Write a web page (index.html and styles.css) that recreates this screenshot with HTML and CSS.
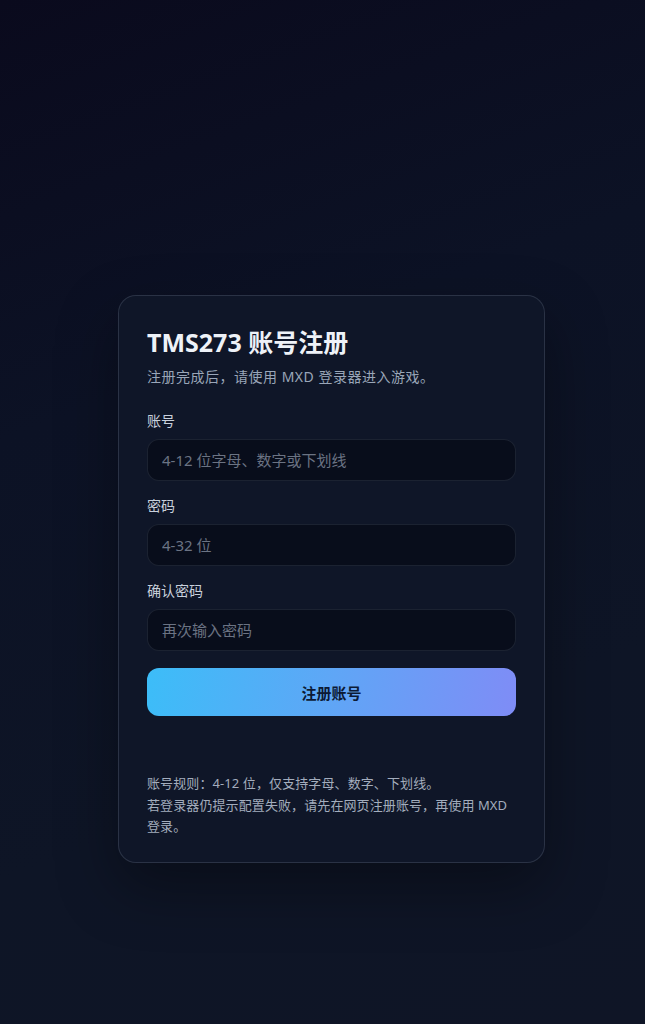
FILE: index.html
```html
<!DOCTYPE html>
<html lang="zh-CN">
<head>
<meta charset="utf-8">
<title>TMS273 账号注册</title>
<link rel="stylesheet" href="styles.css">
</head>
<body>
<main class="page">
  <section class="card">
    <h1 class="title">TMS273 账号注册</h1>
    <p class="subtitle">注册完成后，请使用 MXD 登录器进入游戏。</p>
    <form class="form">
      <div class="field">
        <label class="label" for="acc">账号</label>
        <input class="input" id="acc" type="text" placeholder="4-12 位字母、数字或下划线">
      </div>
      <div class="field">
        <label class="label" for="pwd">密码</label>
        <input class="input" id="pwd" type="password" placeholder="4-32 位">
      </div>
      <div class="field">
        <label class="label" for="pwd2">确认密码</label>
        <input class="input" id="pwd2" type="password" placeholder="再次输入密码">
      </div>
      <button class="btn" type="button">注册账号</button>
    </form>
    <div class="rules">
      <p>账号规则：4-12 位，仅支持字母、数字、下划线。</p>
      <p>若登录器仍提示配置失败，请先在网页注册账号，再使用 MXD 登录。</p>
    </div>
  </section>
</main>
</body>
</html>
```

FILE: styles.css
```css
* { box-sizing: border-box; }
html, body {
  margin: 0;
  padding: 0;
  height: 100%;
}
body {
  font-family: "Noto Sans", "Noto Sans CJK SC", sans-serif;
  background: linear-gradient(160deg, #0a0a1d 0%, #0c1225 35%, #0e1526 70%, #0f1526 100%);
  color: #e2e8f0;
  min-height: 1024px;
}
.page {
  display: flex;
  justify-content: center;
  padding: 295px 0 0 18px;
}
.card {
  width: 427px;
  background: #0f1628;
  border: 1px solid rgba(148, 163, 184, 0.2);
  border-radius: 18px;
  padding: 31px 28px 24px;
  box-shadow: 0 24px 60px rgba(0, 0, 0, 0.35);
}
.title {
  margin: 0;
  font-size: 25px;
  line-height: 30px;
  font-weight: 700;
  color: #eef2f8;
}
.subtitle {
  margin: 9px 0 0;
  font-size: 14px;
  line-height: 21px;
  letter-spacing: 0.5px;
  color: #9aa6b8;
}
.form {
  margin-top: 24px;
  display: flex;
  flex-direction: column;
  gap: 15px;
}
.field {
  display: flex;
  flex-direction: column;
  gap: 8px;
}
.label {
  font-size: 14px;
  line-height: 20px;
  color: #c8d0dc;
}
.input {
  height: 42px;
  width: 100%;
  background: #080d1b;
  border: 1px solid rgba(148, 163, 184, 0.14);
  border-radius: 12px;
  padding: 0 14px;
  font-family: inherit;
  font-size: 15px;
  color: #e2e8f0;
  outline: none;
}
.input::placeholder {
  color: #6b7383;
}
.btn {
  margin-top: 2px;
  height: 48px;
  border: none;
  border-radius: 12px;
  background: linear-gradient(100deg, #3cbdf8 0%, #5fa6f6 50%, #7f8cf6 100%);
  color: #0c1a35;
  font-family: inherit;
  font-size: 15px;
  font-weight: 700;
  cursor: pointer;
}
.rules {
  margin-top: 57px;
  font-size: 13px;
  line-height: 21.5px;
  letter-spacing: 0.1px;
  color: #a3adbd;
}
.rules p {
  margin: 0;
}
```
